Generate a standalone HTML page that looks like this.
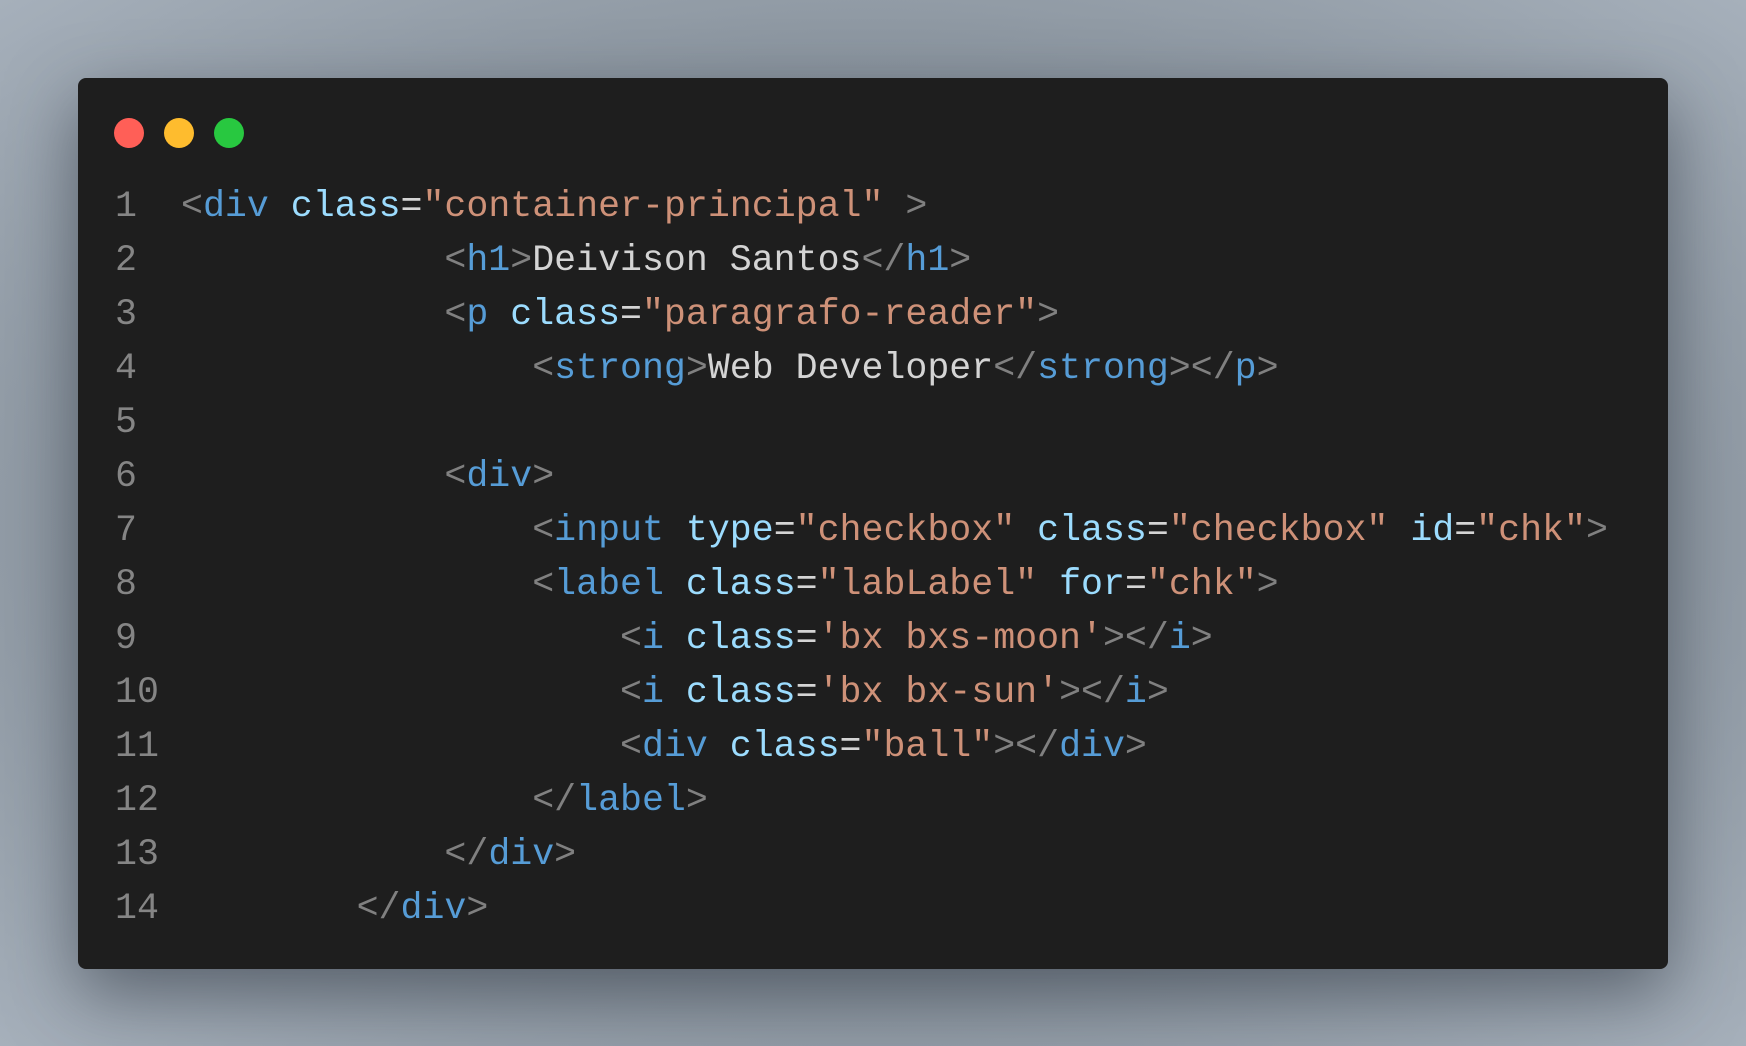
<!DOCTYPE html>
<html><head><meta charset="utf-8"><style>
html,body{margin:0;padding:0;width:1746px;height:1046px;overflow:hidden;}
body{background:radial-gradient(ellipse at 50% 50%,#6e7680 0%,#8a949e 60%,#a6b0bb 100%);}
.card{position:absolute;left:78px;top:78px;width:1590px;height:891px;background:#1e1e1e;border-radius:8px;box-shadow:0 25px 70px rgba(40,48,58,.55);}
.dot{position:absolute;top:118px;width:30px;height:30px;border-radius:50%;}
.l{position:absolute;left:0;font-family:"Liberation Mono",monospace;font-size:36.6px;white-space:pre;line-height:54px;height:54px;}
.n{position:absolute;left:115px;color:#858585;}
.c{position:absolute;left:181px;}
.b{color:#808080}.t{color:#569cd6}.a{color:#9cdcfe}.s{color:#ce9178}.x{color:#d4d4d4}
</style></head><body>
<div class="card"></div>
<div class="dot" style="left:114px;background:#ff5f57"></div>
<div class="dot" style="left:164px;background:#febc2e"></div>
<div class="dot" style="left:214px;background:#28c840"></div>

<div class="l" style="top:180px"><span class="n">1</span><span class="c"><span class="b">&lt;</span><span class="t">div</span> <span class="a">class</span><span class="x">=</span><span class="s">"container-principal"</span> <span class="b">&gt;</span></span></div>
<div class="l" style="top:234px"><span class="n">2</span><span class="c">            <span class="b">&lt;</span><span class="t">h1</span><span class="b">&gt;</span><span class="x">Deivison Santos</span><span class="b">&lt;/</span><span class="t">h1</span><span class="b">&gt;</span></span></div>
<div class="l" style="top:288px"><span class="n">3</span><span class="c">            <span class="b">&lt;</span><span class="t">p</span> <span class="a">class</span><span class="x">=</span><span class="s">"paragrafo-reader"</span><span class="b">&gt;</span></span></div>
<div class="l" style="top:342px"><span class="n">4</span><span class="c">                <span class="b">&lt;</span><span class="t">strong</span><span class="b">&gt;</span><span class="x">Web Developer</span><span class="b">&lt;/</span><span class="t">strong</span><span class="b">&gt;&lt;/</span><span class="t">p</span><span class="b">&gt;</span></span></div>
<div class="l" style="top:396px"><span class="n">5</span></div>
<div class="l" style="top:450px"><span class="n">6</span><span class="c">            <span class="b">&lt;</span><span class="t">div</span><span class="b">&gt;</span></span></div>
<div class="l" style="top:504px"><span class="n">7</span><span class="c">                <span class="b">&lt;</span><span class="t">input</span> <span class="a">type</span><span class="x">=</span><span class="s">"checkbox"</span> <span class="a">class</span><span class="x">=</span><span class="s">"checkbox"</span> <span class="a">id</span><span class="x">=</span><span class="s">"chk"</span><span class="b">&gt;</span></span></div>
<div class="l" style="top:558px"><span class="n">8</span><span class="c">                <span class="b">&lt;</span><span class="t">label</span> <span class="a">class</span><span class="x">=</span><span class="s">"labLabel"</span> <span class="a">for</span><span class="x">=</span><span class="s">"chk"</span><span class="b">&gt;</span></span></div>
<div class="l" style="top:612px"><span class="n">9</span><span class="c">                    <span class="b">&lt;</span><span class="t">i</span> <span class="a">class</span><span class="x">=</span><span class="s">'bx bxs-moon'</span><span class="b">&gt;&lt;/</span><span class="t">i</span><span class="b">&gt;</span></span></div>
<div class="l" style="top:666px"><span class="n">10</span><span class="c">                    <span class="b">&lt;</span><span class="t">i</span> <span class="a">class</span><span class="x">=</span><span class="s">'bx bx-sun'</span><span class="b">&gt;&lt;/</span><span class="t">i</span><span class="b">&gt;</span></span></div>
<div class="l" style="top:720px"><span class="n">11</span><span class="c">                    <span class="b">&lt;</span><span class="t">div</span> <span class="a">class</span><span class="x">=</span><span class="s">"ball"</span><span class="b">&gt;&lt;/</span><span class="t">div</span><span class="b">&gt;</span></span></div>
<div class="l" style="top:774px"><span class="n">12</span><span class="c">                <span class="b">&lt;/</span><span class="t">label</span><span class="b">&gt;</span></span></div>
<div class="l" style="top:828px"><span class="n">13</span><span class="c">            <span class="b">&lt;/</span><span class="t">div</span><span class="b">&gt;</span></span></div>
<div class="l" style="top:882px"><span class="n">14</span><span class="c">        <span class="b">&lt;/</span><span class="t">div</span><span class="b">&gt;</span></span></div>
</body></html>
